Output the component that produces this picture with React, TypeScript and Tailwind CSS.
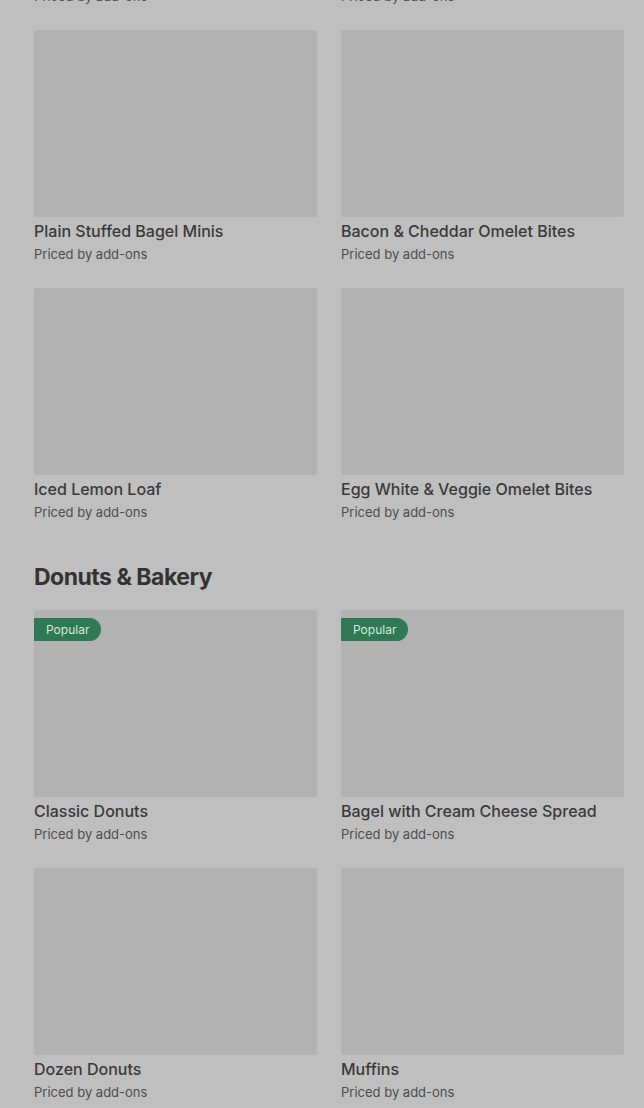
const font = { fontFamily: "Inter, 'Noto Sans', sans-serif" };

type Item = { name: string; popular?: boolean };

function Card({ name, popular }: Item) {
  return (
    <div className="flex flex-col">
      <div className="relative h-[187px] rounded-[2px] bg-[#b2b2b2]">
        {popular && (
          <span className="absolute left-0 top-[8px] flex h-[23px] items-center rounded-r-full bg-[#2e7a55] px-[12px] text-[12px] text-[#d8e6de]">
            Popular
          </span>
        )}
      </div>
      <p className="mt-[2px] h-[24px] text-[16px] font-medium leading-[24px] text-[#3a3a3a]">{name}</p>
      <span className="mt-[1px] h-[20px] text-[13px] leading-[20px] text-[#4d4d4d]">Priced by add-ons</span>
    </div>
  );
}

function Grid({ items }: { items: Item[] }) {
  return (
    <div className="grid grid-cols-2 gap-x-[24px] gap-y-[24px]">
      {items.map((i) => (
        <Card key={i.name} {...i} />
      ))}
    </div>
  );
}

export default function App() {
  return (
    <div className="h-[1108px] overflow-hidden bg-[#bfbfbf]" style={font}>
      <div className="-mt-[228px] pl-[34px] pr-[20px]">
        <Grid
          items={[
            { name: "Sausage, Egg & Cheese Wrap" },
            { name: "Turkey Sausage Wrap" },
            { name: "Plain Stuffed Bagel Minis" },
            { name: "Bacon & Cheddar Omelet Bites" },
            { name: "Iced Lemon Loaf" },
            { name: "Egg White & Veggie Omelet Bites" },
          ]}
        />
        <h2 className="mt-[39px] mb-[17px] text-[23px] font-bold leading-[32px] tracking-[-0.5px] text-[#333333]">
          Donuts &amp; Bakery
        </h2>
        <Grid
          items={[
            { name: "Classic Donuts", popular: true },
            { name: "Bagel with Cream Cheese Spread", popular: true },
            { name: "Dozen Donuts" },
            { name: "Muffins" },
          ]}
        />
      </div>
    </div>
  );
}
